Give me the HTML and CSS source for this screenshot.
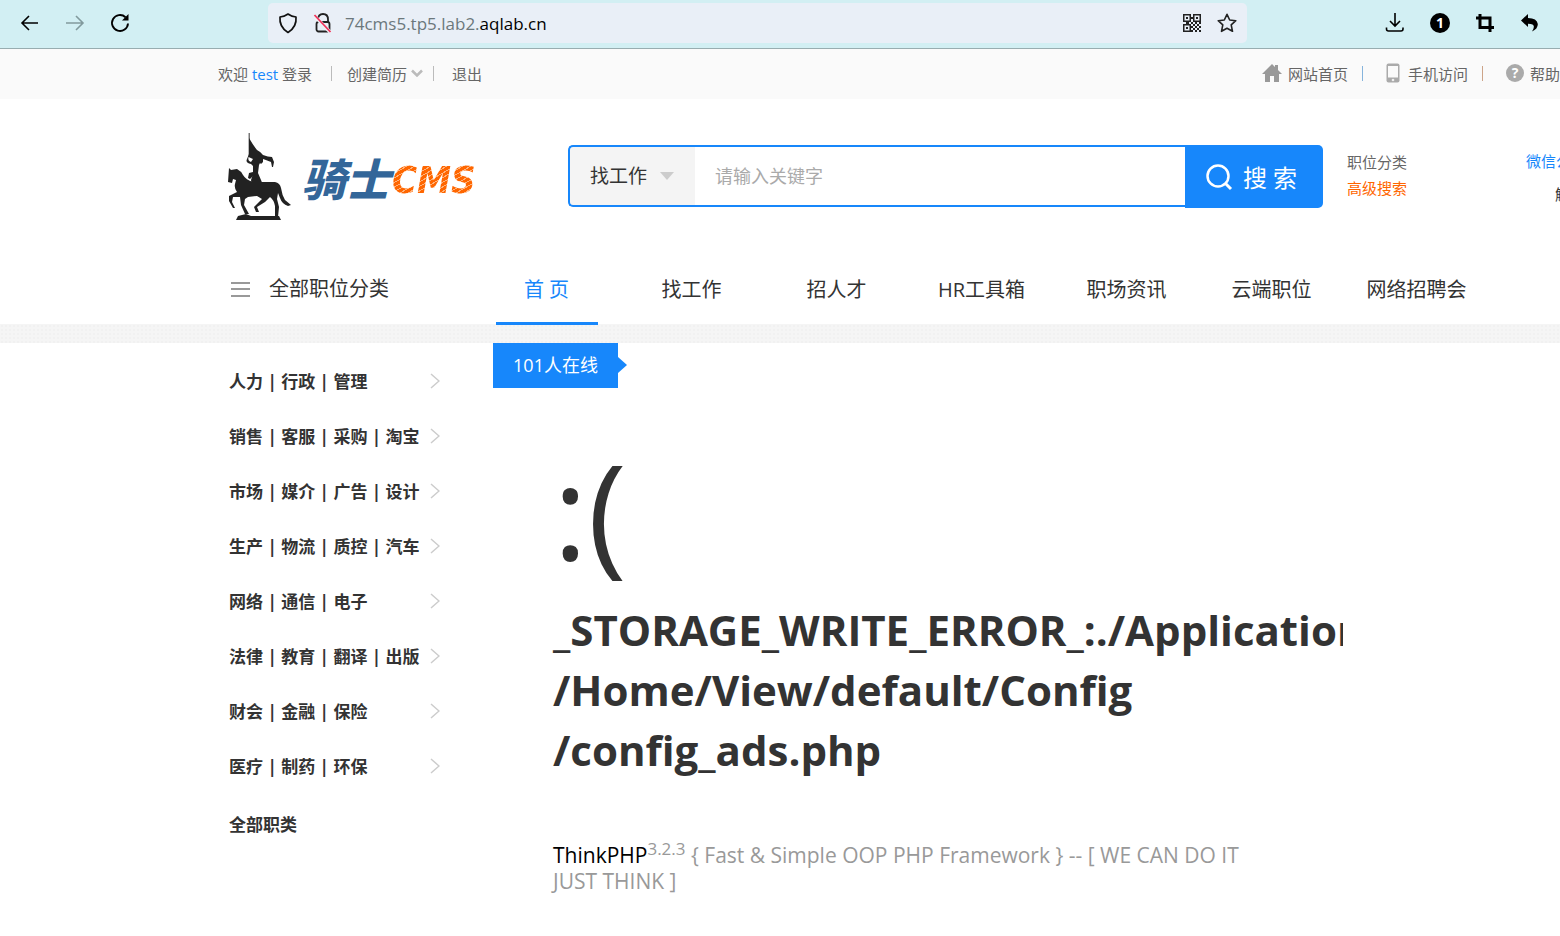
FILE: index.html
```html
<!DOCTYPE html>
<html lang="zh-CN">
<head>
<meta charset="utf-8">
<title>骑士CMS</title>
<link rel="stylesheet" href="styles.css">
</head>
<body>
<div class="browser">
  <div class="browser-nav">
    <button class="tool" aria-label="后退"><svg width="20" height="20" viewBox="0 0 20 20" fill="none" stroke="#000" stroke-width="1.6"><path d="M18 10H2.500M9 3L2 10L9 17"/></svg></button>
    <button class="tool" aria-label="前进"><svg width="20" height="20" viewBox="0 0 20 20" fill="none" stroke="#829a9d" stroke-width="1.6"><path d="M1 10H17.500M11 3L18 10L11 17"/></svg></button>
    <button class="tool" aria-label="刷新"><svg width="20" height="20" viewBox="0 0 20 20" fill="none" stroke="#000" stroke-width="1.900"><path d="M15.500 4.200A8 8 0 1 0 18 10.500"/><path d="M12 7.500H18.500V1Z" fill="#000" stroke="none"/></svg></button>
  </div>
  <div class="address">
    <svg width="20" height="22" viewBox="0 0 20 22" fill="none" stroke="#111" stroke-width="1.700" stroke-linejoin="round"><path d="M10 2Q13.500 4.500 18 5Q19 15 10 20.500Q1 15 2 5Q6.500 4.500 10 2Z"/></svg>
    <svg class="lock" width="20" height="22" viewBox="0 0 20 22" fill="none" stroke="#222" stroke-width="1.800"><path d="M5 10V7.500Q5 2 10 2T15 7.500V10"/><rect x="3.500" y="10" width="13" height="9.500" rx="2"/><path d="M1.500 4L17.500 20.500" stroke="#eef1f6" stroke-width="3.500"/><path d="M1.500 3L17.500 20" stroke="#f0325a"/></svg>
    <span class="url">74cms5.tp5.lab2.<b>aqlab.cn</b></span>
    <svg class="qr" width="18" height="18" viewBox="0 0 18 18" fill="#222"><path fill-rule="evenodd" d="M0 0H8V8H0ZM1.500 1.500V6.500H6.500V1.500ZM10 0H18V8H10ZM11.500 1.500V6.500H16.500V1.500ZM0 10H8V18H0ZM1.500 11.500V16.500H6.500V11.500Z"/><path d="M3 3h2v2H3zM13 3h2v2h-2zM3 13h2v2H3zM8 3h2v2H8zM8 8h2v2H8zM3 8h3v2H3zM12 8h2v2h-2zM16 8h2v2h-2zM10 10h2v2h-2zM14 10h2v2h-2zM8 12h2v2H8zM12 12h2v2h-2zM16 12h2v2h-2zM10 14h2v2h-2zM14 14h2v2h-2zM8 16h2v2H8zM12 16h2v2h-2zM16 16h2v2h-2z"/></svg>
    <svg width="20" height="20" viewBox="0 0 20 20" fill="none" stroke="#222" stroke-width="1.600" stroke-linejoin="round"><path d="M10 1.300L12.700 7L18.800 7.700L14.200 11.900L15.500 18.300L10 15.200L4.500 18.300L5.800 11.900L1.200 7.700L7.300 7Z"/></svg>
  </div>
  <div class="browser-tools">
    <button class="tool" aria-label="下载"><svg width="20" height="20" viewBox="0 0 20 20" fill="none" stroke="#000" stroke-width="1.600"><path d="M10 0V13M5 8L10 13L15 8M1.500 14.500V16Q1.500 18 3.500 18H16Q18 18 18 16V14.500"/></svg></button>
    <button class="tool count" aria-label="通知">1</button>
    <button class="tool" aria-label="截图"><svg width="20" height="20" viewBox="0 0 20 20" fill="none" stroke="#000" stroke-width="3"><path d="M1 5H15V19M5 1V14.500H19"/></svg></button>
    <button class="tool" aria-label="撤销"><svg width="20" height="20" viewBox="0 0 20 20"><path d="M1 7.500L8 1V5Q17 5 17.800 11Q18 16 12 18.500Q15.500 13 12.500 11.500Q11 10.700 8 10.700V14Z"/></svg></button>
  </div>
</div>

<div class="topbar">
  <div class="account">
    <span>欢迎 <a class="blue" href="#">test</a> 登录</span>
    <i class="rule"></i>
    <a class="resume" href="#">创建简历 <svg width="12" height="8" viewBox="0 0 12 8" fill="none" stroke="#bbb" stroke-width="2.500"><path d="M1 1.500L6 6.500L11 1.500"/></svg></a>
    <i class="rule"></i>
    <a href="#">退出</a>
  </div>
  <div class="links">
    <a href="#"><svg width="20" height="18" viewBox="0 0 20 18" fill="#999"><path d="M10 0L13 3V1H16V6L20 10H17V18H12V12H8V18H3V10H0Z"/></svg>网站首页</a>
    <i class="rule cool"></i>
    <a class="phone" href="#"><svg width="14" height="20" viewBox="0 0 14 20"><rect x="0.500" y="0.500" width="13" height="19" rx="2" fill="#aaa"/><path d="M2 3H12V14.500H2Z" fill="#fafafa"/><circle cx="7" cy="17" r="1.300" fill="#eee"/></svg>手机访问</a>
    <i class="rule warm"></i>
    <a href="#"><span class="help">?</span>帮助</a>
  </div>
</div>

<header class="header">
  <a class="logo" href="#">
    <svg width="68" height="90" viewBox="0 0 68 90" fill="#222">
      <path d="M23.500 1H25V24H23.500Z" fill="#777"/>
      <path d="M24 6Q28 13 32 18Q36 20 38 23Q43 25 47 25L49 30L48 35L47 35L46 30Q41 28 38 27L38 30L36 32L35 31L34 33L33 41L36 48L38 53L27 54L26 48L28 42L28 34L26 32Q20 31 22 27L24 22Z"/>
      <path d="M23.500 25Q22.500 29 26 30L28 27Z" fill="#fff"/>
      <path d="M24 41L28 40V44L25 47L23 46Z"/>
      <path d="M4 36L6 38L12 37Q16 39 18 43Q21 48 28 50L38 50H50Q55 51 56 56Q57 63 60 68L66 73L63 74Q57 72 55 66L53 61L52 67L54 75L53 85H50V74Q49 68 45 65L40 70L32 75L34 80L31 80L29 75L37 67L32 64L23 65L20 67L19 73L24 82H20L16 73L15 65L8 65L7 70L10 76H8L4 69L4 64L12 60Q9 56 10 52L11 48L8 47L7 51L3 50Z"/>
      <path d="M13 84L21 82L26 84H54L56 88H11Z"/>
    </svg>
    <span class="brand">骑士</span><span class="cms">CMS</span>
  </a>
  <form class="search">
    <span class="kind"><select aria-label="搜索类型"><option>找工作</option></select></span>
    <input type="text" placeholder="请输入关键字" aria-label="关键字">
    <button type="button"><svg width="28" height="28" viewBox="0 0 28 28" fill="none" stroke="#fff" stroke-width="2.500"><circle cx="13" cy="13" r="10.500"/><path d="M20.500 20.500L26 26" stroke-width="3"/></svg>搜 索</button>
  </form>
  <div class="shortcuts"><a href="#">职位分类</a><a class="orange" href="#">高级搜索</a></div>
  <div class="wechat"><a class="blue" href="#">微信公</a><a class="unbind" href="#">解</a></div>
</header>

<nav class="nav">
  <a class="all" href="#"><svg width="19" height="15" viewBox="0 0 19 15" fill="#999"><path d="M0 0h19v2H0zM0 6h19v2H0zM0 13h19v2H0z"/></svg>全部职位分类</a>
  <div class="tabs">
    <a class="active" href="#">首 页</a><a href="#">找工作</a><a href="#">招人才</a><a href="#">HR工具箱</a><a href="#">职场资讯</a><a href="#">云端职位</a><a href="#">网络招聘会</a>
  </div>
</nav>
<div class="strip"></div>

<div class="content">
  <aside class="categories">
    <a class="row" href="#">人力 | 行政 | 管理<svg class="chev" viewBox="0 0 10 16"><path d="M1 1L9 8L1 15"/></svg></a>
    <a class="row" href="#">销售 | 客服 | 采购 | 淘宝<svg class="chev" viewBox="0 0 10 16"><path d="M1 1L9 8L1 15"/></svg></a>
    <a class="row" href="#">市场 | 媒介 | 广告 | 设计<svg class="chev" viewBox="0 0 10 16"><path d="M1 1L9 8L1 15"/></svg></a>
    <a class="row" href="#">生产 | 物流 | 质控 | 汽车<svg class="chev" viewBox="0 0 10 16"><path d="M1 1L9 8L1 15"/></svg></a>
    <a class="row" href="#">网络 | 通信 | 电子<svg class="chev" viewBox="0 0 10 16"><path d="M1 1L9 8L1 15"/></svg></a>
    <a class="row" href="#">法律 | 教育 | 翻译 | 出版<svg class="chev" viewBox="0 0 10 16"><path d="M1 1L9 8L1 15"/></svg></a>
    <a class="row" href="#">财会 | 金融 | 保险<svg class="chev" viewBox="0 0 10 16"><path d="M1 1L9 8L1 15"/></svg></a>
    <a class="row" href="#">医疗 | 制药 | 环保<svg class="chev" viewBox="0 0 10 16"><path d="M1 1L9 8L1 15"/></svg></a>
    <a class="row last" href="#">全部职类</a>
  </aside>
  <main class="main">
    <div class="online">101人在线</div>
    <div class="error">
      <p class="face">:(</p>
      <h1>_STORAGE_WRITE_ERROR_:./Application<br>/Home/View/default/Config<br>/config_ads.php</h1>
      <p class="copyright"><a href="#">ThinkPHP</a><sup>3.2.3</sup> { Fast &amp; Simple OOP PHP Framework } -- [ WE CAN DO IT JUST THINK ]</p>
    </div>
  </main>
</div>
</body>
</html>
```
FILE: styles.css
```css
* { box-sizing: border-box; }
body {
  margin: 0;
  background: #fff;
  color: #333;
  font-family: "Open Sans", "Noto Sans CJK SC", sans-serif;
  font-size: 15px;
  overflow-x: hidden;
}
a { color: inherit; text-decoration: none; white-space: nowrap; }
button { font: inherit; border: 0; cursor: pointer; }
svg { display: block; flex: none; }
p, h1 { margin: 0; }
.blue { color: #1787fb; }
.orange { color: #ff6600; }

.browser {
  display: flex;
  align-items: center;
  height: 49px;
  padding: 0 20px 2px;
  background: #d2eff3;
  border-bottom: 1px solid #98adb0;
}
.browser-nav { display: flex; gap: 25px; width: 248px; }
.tool { padding: 0; background: none; }
.address {
  display: flex;
  align-items: center;
  flex: 1;
  height: 40px;
  padding: 0 10px;
  background: #e9eff7;
  border-radius: 5px;
}
.lock { margin-left: 15px; }
.url { margin-left: 12px; font-size: 17px; color: #6c787c; }
.url b { font-weight: 400; color: #000; }
.qr { margin: 0 16px 0 auto; }
.browser-tools { display: flex; gap: 25px; margin-left: 138px; }
.count {
  width: 20px;
  height: 20px;
  border-radius: 50%;
  background: #000;
  color: #fff;
  font-size: 14px;
  font-weight: 700;
  line-height: 20px;
}

.topbar {
  display: flex;
  align-items: center;
  justify-content: space-between;
  height: 50px;
  padding: 0 0 2px 218px;
  background: #fafafa;
  color: #666;
}
.account, .links, .links a, .resume { display: flex; align-items: center; }
.account .rule { margin: 0 15px 0 19px; }
.account .resume + .rule { margin: 0 18px 0 10px; }
.resume { gap: 4px; }
.rule { width: 1px; height: 15px; background: #bbb; }
.links a { gap: 6px; }
.links .phone { gap: 8px; }
.links .rule { margin: 0 23px 0 14px; }
.links .cool { background: #86b4dc; }
.links .warm { background: #cda488; }
.help {
  width: 18px;
  height: 18px;
  border-radius: 50%;
  background: #aaa;
  color: #fff;
  font-size: 14px;
  font-weight: 700;
  line-height: 18px;
  text-align: center;
}

.header {
  display: flex;
  align-items: center;
  height: 155px;
  padding-left: 225px;
}
.logo { display: flex; align-items: center; width: 343px; }
.brand {
  margin-left: 9px;
  padding-top: 4px;
  color: #336699;
  font-size: 44px;
  font-style: italic;
  font-weight: 900;
  line-height: 60px;
}
.cms {
  padding: 6px 6px 0 2px;
  font-family: "DejaVu Sans Condensed", "DejaVu Sans", sans-serif;
  font-size: 38px;
  font-style: italic;
  font-weight: 700;
  line-height: 60px;
  background: repeating-linear-gradient(150deg, #ff6600 0 3px, #ffb27a 3px 4px);
  background-clip: text;
  -webkit-background-clip: text;
  color: transparent;
}
.search { display: flex; flex: 1; height: 63px; }
.kind {
  position: relative;
  width: 127px;
  height: 62px;
  border: 2px solid #1787fb;
  border-right: 0;
  border-radius: 5px 0 0 5px;
  background: #f4f4f4;
}
.kind::after {
  content: "";
  position: absolute;
  right: 21px;
  top: 25px;
  border: 7px solid transparent;
  border-top: 8px solid #ccc;
  border-bottom: 0;
}
.kind select {
  width: 100%;
  height: 100%;
  padding: 0 20px;
  appearance: none;
  border: 0;
  background: none;
  color: #333;
  font: inherit;
  font-size: 19px;
}
.search input {
  flex: 1;
  min-width: 0;
  height: 62px;
  padding: 0 20px;
  border: solid #1787fb;
  border-width: 2px 0;
  font: inherit;
  font-size: 18px;
}
.search input::placeholder { color: #aaa; }
.search button {
  display: flex;
  align-items: center;
  justify-content: center;
  gap: 10px;
  width: 138px;
  padding: 0 6px 0 0;
  border-radius: 0 5px 5px 0;
  background: #1787fb;
  color: #fff;
  font-size: 24px;
}
.shortcuts { display: flex; flex-direction: column; width: 203px; padding: 0 0 4px 24px; line-height: 26px; color: #666; }
.wechat { width: 34px; overflow: hidden; padding-top: 2px; line-height: 33px; }
.wechat a { display: block; }
.unbind { padding-left: 29px; }

.nav { display: flex; height: 70px; padding-left: 231px; font-size: 20px; line-height: 72px; }
.all { display: flex; align-items: center; gap: 19px; width: 243px; }
.tabs { display: grid; grid-template-columns: repeat(7, 145px); text-align: center; }
.active {
  width: 102px;
  height: 71px;
  justify-self: center;
  color: #1787fb;
  border-bottom: 3px solid #1787fb;
  z-index: 1;
}
.strip {
  height: 19px;
  background: radial-gradient(circle, #f1f1f1 1px, transparent 1px) 0 0 / 4px 4px, #f5f5f5;
}

.content { display: flex; }
.categories { width: 493px; padding: 10px 53px 0 229px; font-size: 17px; font-weight: 700; }
.row { display: flex; align-items: center; justify-content: space-between; height: 55px; }
.row.last { height: 60px; }
.chev { width: 10px; height: 16px; fill: none; stroke: #ccc; stroke-width: 1.5; }
.main { flex: 1; max-width: 850px; overflow: hidden; }
.online {
  position: relative;
  width: 125px;
  background: #1787fb;
  color: #fff;
  font-size: 18px;
  line-height: 45px;
  text-align: center;
}
.online::after {
  content: "";
  position: absolute;
  left: 100%;
  top: 14px;
  border: 8px solid transparent;
  border-left: 9px solid #1787fb;
  border-right: 0;
}
.error { padding: 45px 60px 0; }
.face { font-size: 132px; line-height: 152px; }
h1 { padding-top: 15px; font-size: 42px; line-height: 60px; white-space: nowrap; }
.copyright { padding-top: 62px; color: #999; font-size: 21px; line-height: 26px; }
.copyright a { color: #000; }
sup { font-size: 17px; line-height: 0; }
```
